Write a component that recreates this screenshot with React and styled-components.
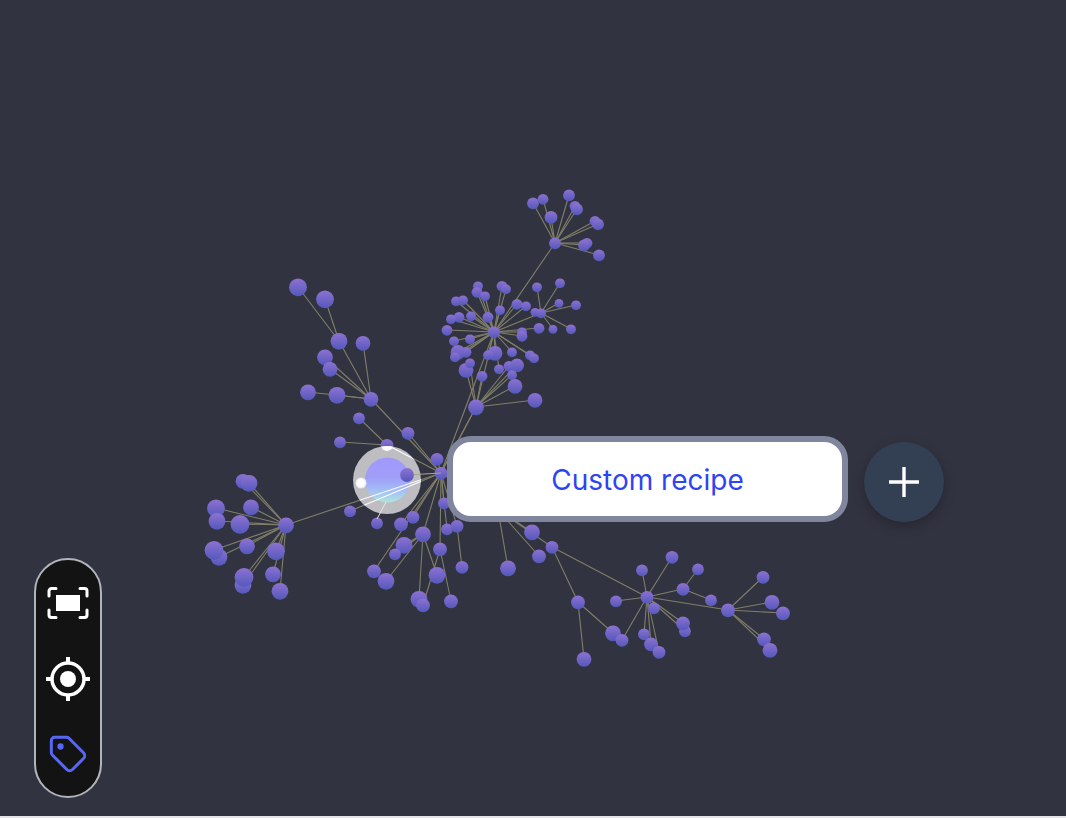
import styled, { createGlobalStyle } from 'styled-components';

const GlobalStyle = createGlobalStyle`
    html, body {
        margin: 0;
        padding: 0;
        background: #e4e4e8;
        font-family: Inter, "Liberation Sans", sans-serif;
    }
`
const Canvas = styled.div`
    position: relative;
    width: 1066px;
    height: 816px;
    overflow: hidden;
    background: #323340;
`
const GraphSvg = styled.svg`
    display: block;
    width: 1066px;
    height: 816px;
`
const Toolbar = styled.div`
    position: absolute;
    left: 34px;
    top: 558px;
    box-sizing: border-box;
    width: 68px;
    height: 240px;
    padding: 19px 0 18px;
    display: flex;
    flex-direction: column;
    align-items: center;
    justify-content: space-between;
    background: #131313;
    border: 2px solid #b1b4bb;
    border-radius: 34px;
`
const ToolButton = styled.button`
    display: flex;
    align-items: center;
    justify-content: center;
    width: 48px;
    height: 48px;
    padding: 0;
    border: none;
    background: none;
    color: ${props => props.$color || '#fff'};
`
const RecipeRow = styled.div`
    position: absolute;
    left: 447px;
    top: 436px;
    display: flex;
    align-items: center;
    gap: 16px;
`
const RecipeCard = styled.div`
    box-sizing: border-box;
    width: 401px;
    height: 86px;
    padding-top: 1px;
    display: flex;
    align-items: center;
    justify-content: center;
    background: #fff;
    border: 6px solid #80869d;
    border-radius: 24px;
    color: #3043f2;
    font-size: 28px;
    font-weight: 400;
`
const AddButton = styled.button`
    display: flex;
    align-items: center;
    justify-content: center;
    width: 80px;
    height: 80px;
    margin-top: 6px;
    padding: 0;
    border: none;
    border-radius: 50%;
    background: #334054;
    box-shadow: 0 4px 12px rgba(0, 0, 0, 0.25);
    color: #fff;
`

// x, y, radius, parent
const NODES = {
    a: [441, 473, 6], b: [476, 407, 7.5, 'a'], c: [494, 332, 5.5, 'a'], d: [555, 243, 5.5, 'c'],
    e: [541, 313, 4.5, 'c'], f: [371, 399, 7, 'a'], g: [286, 525, 7.5, 'a'],
    f1: [339, 341, 8, 'f'], k: [387, 445, 6, 'a'], m: [423, 534, 7.5, 'a'], n: [440, 549, 6.5, 'a'],
    p: [457, 526, 6, 'a'], w: [498, 510, 6, 'a'], q: [552, 547, 6, 'w'], h: [647, 597, 6, 'q'], s: [578, 602, 6.5, 'q'],
    t: [683, 589, 6, 'h'], u: [728, 610, 6.5, 'h'],
}
const LEAVES = [
    ['d', [[533, 203, 5.5], [543, 199, 5], [551, 217, 6], [569, 195, 5.5], [575, 206, 5], [577, 209, 5.5], [595, 221, 5], [598, 224, 5.5], [587, 243, 5], [584, 245, 5.5], [599, 255, 5.5]]],
    ['c', [[478, 286, 4.5], [477, 292, 5], [485, 296, 4.5], [502, 286, 5], [506, 289, 4.5], [456, 301, 4.5], [463, 300, 4.5], [517, 304, 5], [526, 306, 4.5], [500, 310, 4.5], [488, 317, 5], [471, 316, 4.5], [459, 317, 5], [451, 319, 4.5], [447, 330, 5], [454, 341, 4.5], [470, 339, 4.5], [539, 328, 5], [522, 332, 4.5], [522, 336, 5], [512, 352, 4.5], [530, 355, 4.5], [534, 358, 4.5], [495, 353, 7], [488, 355, 4.5], [466, 352, 5], [458, 352, 7], [455, 357, 4.5], [499, 369, 4.5]]],
    ['b', [[466, 370, 7], [470, 363, 4.5], [482, 376, 5], [509, 366, 5], [517, 365, 6.5], [512, 375, 4.5], [515, 386, 7], [535, 400, 7]]],
    ['e', [[535, 312, 4], [537, 287, 4.5], [560, 283, 4.5], [559, 303, 4], [576, 305, 4.5], [553, 329, 4], [571, 329, 4.5]]],
    ['f1', [[298, 287, 8.5], [325, 299, 8.5]]],
    ['f', [[363, 343, 7], [325, 357, 7.5], [330, 369, 7], [308, 392, 7.5], [337, 395, 8]]],
    ['k', [[359, 418, 5.5], [340, 442, 5.5]]],
    ['g', [[243, 481, 7], [249, 483, 8], [251, 507, 7.5], [216, 508, 8.5], [217, 521, 8], [240, 524, 9], [247, 546, 7.5], [219, 557, 8], [214, 550, 9], [276, 551, 8.5], [273, 574, 7.5], [243, 585, 8], [244, 577, 9], [280, 591, 8]]],
    ['a', [[408, 433, 6], [437, 459, 6], [350, 511, 5.5], [401, 524, 6.5], [413, 517, 6], [444, 503, 5.5], [447, 529, 5.5], [374, 571, 6.5]]],
    ['w', [[508, 568, 7.5], [532, 532, 7.5], [539, 556, 6.5]]],
    ['m', [[386, 581, 8], [404, 545, 8], [395, 554, 5.5], [437, 575, 8], [419, 599, 8]]],
    ['n', [[423, 605, 6.5], [451, 601, 6.5]]],
    ['p', [[462, 567, 6]]],
    ['s', [[613, 633, 7.5], [584, 659, 7]]],
    ['h', [[642, 570, 5.5], [672, 557, 6], [616, 601, 5.5], [654, 608, 5.5], [685, 631, 5.5], [683, 623, 6.5], [622, 640, 6], [644, 634, 5.5], [651, 644, 6.5], [659, 652, 6]]],
    ['t', [[698, 569, 5.5], [711, 600, 5.5]]],
    ['u', [[763, 577, 6], [772, 602, 7], [783, 613, 6.5], [764, 639, 6.5], [770, 650, 7]]],
]

const edges = [[NODES.b, NODES.c], [NODES.b, NODES.a]]
const dots = [[377, 523, 5.5]]
Object.values(NODES).forEach(node => {
    if (node[3]) edges.push([NODES[node[3]], node])
})
LEAVES.forEach(([parent, list]) => {
    list.forEach(leaf => {
        edges.push([NODES[parent], leaf])
        dots.push(leaf)
    })
})
Object.values(NODES).forEach(node => dots.push(node))

function EdgeLines({ color, clip, width }) {
    return (
        <g stroke={color} strokeWidth={width} clipPath={clip}>
            {edges.map(([from, to], i) => (
                <line key={i} x1={from[0]} y1={from[1]} x2={to[0]} y2={to[1]} />
            ))}
        </g>
    )
}

function Graph() {
    return (
        <GraphSvg viewBox="0 0 1066 816">
            <defs>
                <linearGradient id="ball" x1="0" y1="0" x2="0" y2="1">
                    <stop offset="0" stopColor="#8d72d2" />
                    <stop offset="1" stopColor="#5558bc" />
                </linearGradient>
                <linearGradient id="sphere" x1="0" y1="0" x2="0" y2="1">
                    <stop offset="0" stopColor="#9f99fb" />
                    <stop offset="0.45" stopColor="#a09ef9" />
                    <stop offset="0.8" stopColor="#a5c6f6" />
                    <stop offset="1" stopColor="#aee8da" />
                </linearGradient>
                <radialGradient id="glint">
                    <stop offset="0.6" stopColor="#ffffff" />
                    <stop offset="1" stopColor="#e4e4ee" />
                </radialGradient>
                <clipPath id="halo">
                    <circle cx="387" cy="480" r="34" />
                </clipPath>
            </defs>
            <EdgeLines color="#807f68" width="1.1" />
            {dots.map((dot, i) => (
                <circle key={i} cx={dot[0]} cy={dot[1] + 0.3} r={dot[2] + 0.4} fill="url(#ball)" />
            ))}
            <circle cx="387" cy="480" r="34" fill="#bdbdc2" />
            <circle cx="387.5" cy="480" r="22.5" fill="url(#sphere)" />
            <circle cx="361" cy="483" r="5.5" fill="url(#glint)" />
            <EdgeLines color="#ffffff" width="1.1" clip="url(#halo)" />
            <circle cx="387" cy="445" r="6" fill="#fff" clipPath="url(#halo)" />
            <line x1="407" y1="475" x2="441" y2="473" stroke="#a7a68f" />
            <line x1="377" y1="519" x2="386" y2="502" stroke="#e8e8e8" />
            <circle cx="407" cy="475" r="6.9" fill="url(#ball)" />
        </GraphSvg>
    )
}

function FrameIcon() {
    return (
        <svg width="42" height="32" viewBox="0 0 42 32" fill="none">
            <g stroke="currentColor" strokeWidth="3" strokeLinecap="round" strokeLinejoin="round">
                <path d="M2 9V4a2.5 2.5 0 0 1 2.5-2.5H9" />
                <path d="M33 1.500h4.500A2.500 2.500 0 0 1 40 4v5" />
                <path d="M2 23v5a2.500 2.500 0 0 0 2.500 2.500H9" />
                <path d="M33 30.500h4.500A2.500 2.500 0 0 0 40 28v-5" />
            </g>
            <rect x="9" y="8" width="24" height="16" fill="currentColor" />
        </svg>
    )
}

function TargetIcon() {
    return (
        <svg width="44" height="44" viewBox="0 0 44 44" fill="none">
            <circle cx="22" cy="22" r="16" stroke="currentColor" strokeWidth="3.5" />
            <circle cx="22" cy="22" r="8" fill="currentColor" />
            <path d="M22 0v6M22 38v6M0 22h6M38 22h6" stroke="currentColor" strokeWidth="4" />
        </svg>
    )
}

function TagIcon() {
    return (
        <svg width="40" height="40" viewBox="0 0 24 24" fill="none" stroke="currentColor" strokeWidth="1.800" strokeLinecap="round" strokeLinejoin="round">
            <path d="M12.586 2.586A2 2 0 0 0 11.172 2H4a2 2 0 0 0-2 2v7.172a2 2 0 0 0 .586 1.414l8.704 8.704a2.426 2.426 0 0 0 3.420 0l6.580-6.580a2.426 2.426 0 0 0 0-3.420z" />
            <circle cx="7.500" cy="7.500" r="1" fill="currentColor" />
        </svg>
    )
}

function App() {
    return (
        <>
            <GlobalStyle />
            <Canvas>
                <Graph />
                <RecipeRow>
                    <RecipeCard>Custom recipe</RecipeCard>
                    <AddButton aria-label="Add">
                        <svg width="30" height="30" viewBox="0 0 30 30">
                            <path d="M15 0v30M0 15h30" stroke="currentColor" strokeWidth="3.400" />
                        </svg>
                    </AddButton>
                </RecipeRow>
                <Toolbar>
                    <ToolButton aria-label="Fit"><FrameIcon /></ToolButton>
                    <ToolButton aria-label="Center"><TargetIcon /></ToolButton>
                    <ToolButton aria-label="Labels" $color="#5766f5"><TagIcon /></ToolButton>
                </Toolbar>
            </Canvas>
        </>
    )
}

export default App;
